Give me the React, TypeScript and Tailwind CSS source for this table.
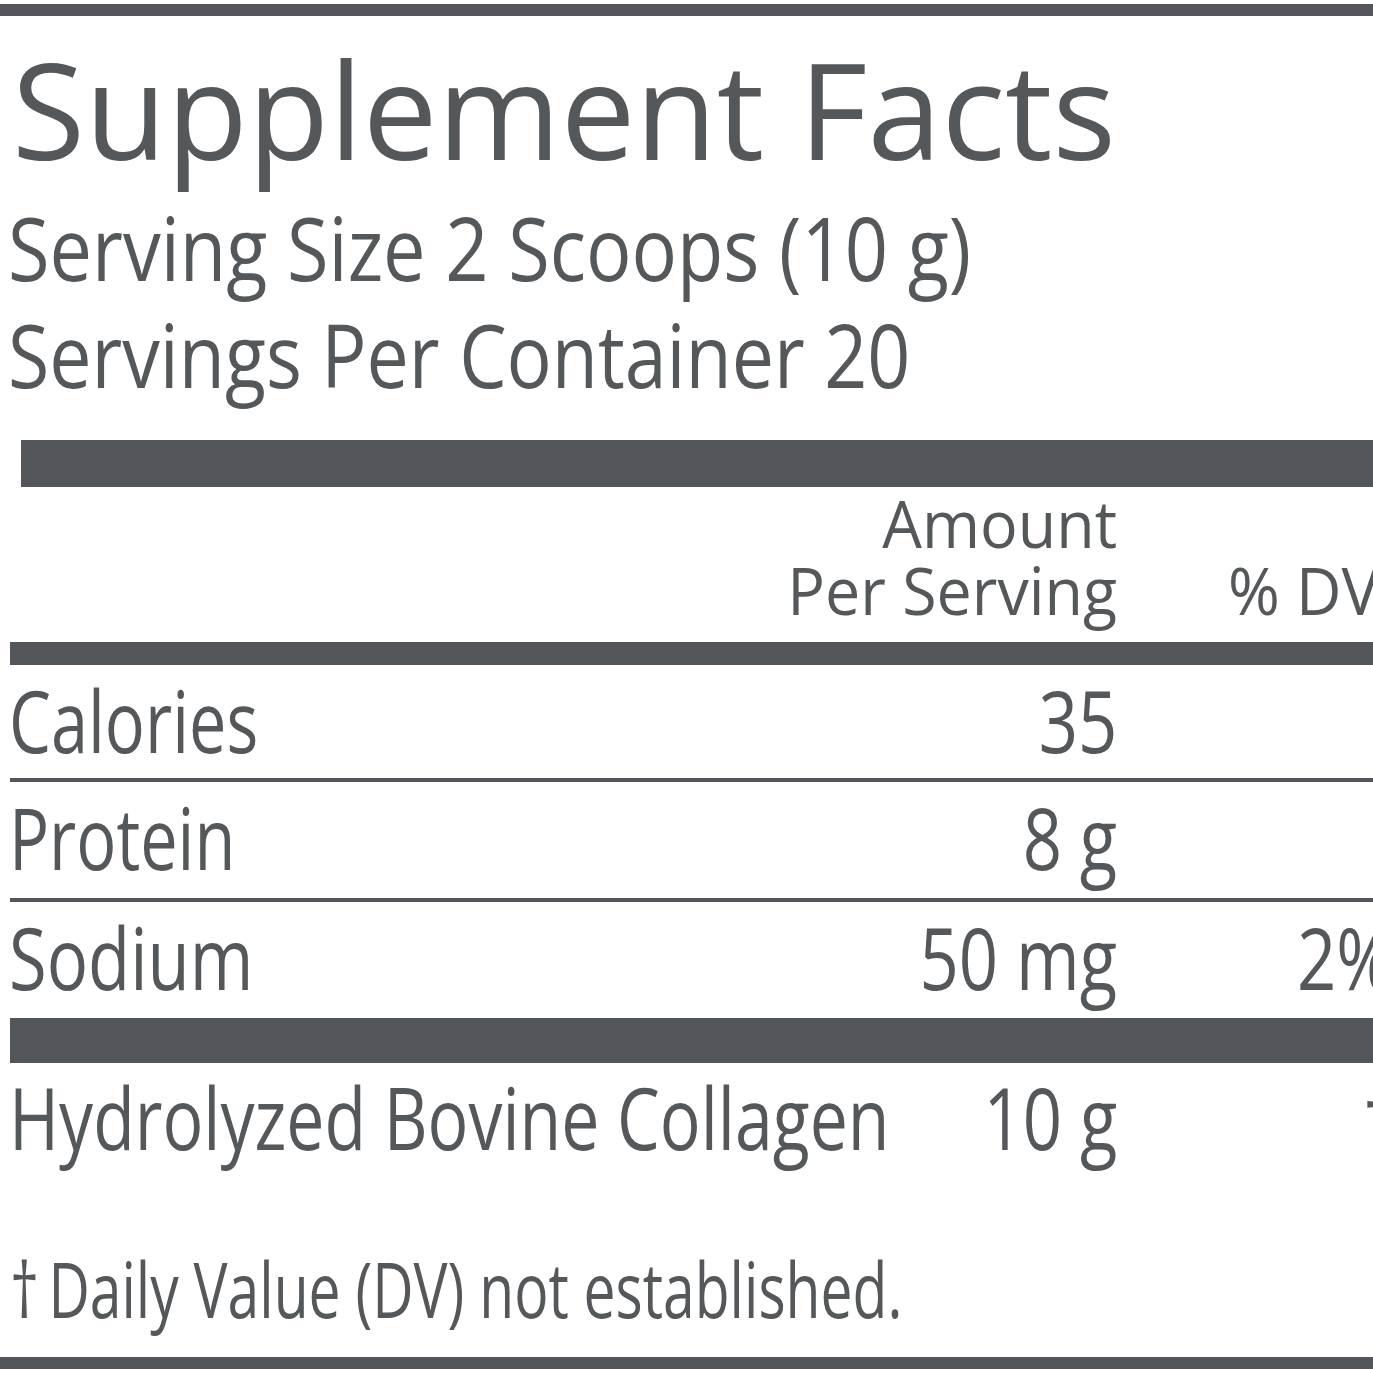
import React from 'react';

const bar = 'bg-[#52565a]';

const Cond = ({
	children,
	right,
	scale,
}: {
	children: React.ReactNode;
	right?: boolean;
	scale: string;
}) => (
	<span
		className={`inline-block whitespace-nowrap ${right ? 'origin-right' : 'origin-left'} ${scale}`}
	>
		{children}
	</span>
);

const rows = [
	{ label: 'Calories', amount: '35', dv: '', h: 'h-[117px]', line: true },
	{ label: 'Protein', amount: '8 g', dv: '', h: 'h-[120px]', line: true },
	{ label: 'Sodium', amount: '50 mg', dv: '2%', h: 'h-[116px]', line: false },
];

const Row = (props: {
	label: string;
	amount: string;
	dv: React.ReactNode;
	dvPad: string;
	labelScale?: string;
	className: string;
}) => (
	<div className={`flex text-[86px] leading-none ${props.className}`}>
		<div className="w-[807px] min-w-0 shrink-0 -ml-[1px]">
			<Cond scale={props.labelScale ?? 'scale-x-[0.775]'}>{props.label}</Cond>
		</div>
		<div className="w-[301px] min-w-0 shrink-0 text-right">
			<Cond right scale="scale-x-[0.8]">
				{props.amount}
			</Cond>
		</div>
		<div className={`min-w-0 shrink-0 ${props.dvPad}`}>
			<Cond scale="scale-x-[0.8]">{props.dv}</Cond>
		</div>
	</div>
);

export default function App() {
	return (
		<div className="w-[1373px] h-[1373px] overflow-hidden bg-white text-[#54585b] font-['Open_Sans','Noto_Sans',sans-serif]">
			<div className={`mt-[4px] h-[12px] ${bar}`} />

			<h1 className="mt-[26px] pl-[12px] text-[133px] leading-none whitespace-nowrap">
				Supplement Facts
			</h1>
			<p className="mt-[29px] pl-[8px] text-[87px] leading-none">
				<Cond scale="scale-x-[0.87]">Serving Size 2 Scoops (10 g)</Cond>
			</p>
			<p className="mt-[20px] pl-[8px] text-[87px] leading-none">
				<Cond scale="scale-x-[0.865]">Servings Per Container 20</Cond>
			</p>

			<div className={`mt-[42px] ml-[21px] h-[47px] ${bar}`} />

			<div className="ml-[10px] w-[1450px]">
				{/* column header */}
				<div className="flex mt-[2px] text-[66px] leading-[67px]">
					<div className="w-[1107px] text-right">
						<div>
							<Cond right scale="scale-x-[0.95]">Amount</Cond>
						</div>
						<div>
							<Cond right scale="scale-x-[0.95]">Per Serving</Cond>
						</div>
					</div>
					<div className="flex flex-col justify-end pl-[111px]">
						<Cond scale="scale-x-[0.95]">% DV</Cond>
					</div>
				</div>

				<div className={`mt-[19px] h-[23px] ${bar}`} />

				{rows.map((r) => (
					<Row
						key={r.label}
						label={r.label}
						amount={r.amount}
						dv={r.dv}
						dvPad="pl-[180px]"
						labelScale={r.label === 'Sodium' ? 'scale-x-[0.8]' : undefined}
						className={`pt-[12px] ${r.h} ${r.line ? 'border-b-[4px] border-[#52565a]' : ''}`}
					/>
				))}

				<div className={`h-[45px] ${bar}`} />

				<Row
					label="Hydrolyzed Bovine Collagen"
					amount="10 g"
					dv="†"
					dvPad="pl-[246px]"
					labelScale="scale-x-[0.79]"
					className="pt-[11px]"
				/>

				<p className="mt-[91px] text-[76px] leading-none">
					<Cond scale="scale-x-[0.75]">†{'\u2009'}Daily Value (DV) not established.</Cond>
				</p>
			</div>

			<div className={`mt-[30px] h-[12px] ${bar}`} />
		</div>
	);
}
